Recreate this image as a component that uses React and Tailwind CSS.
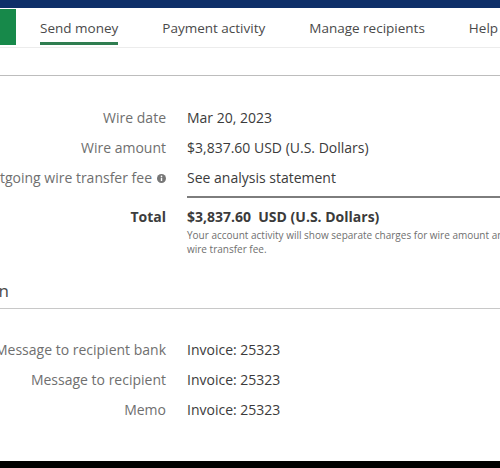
import React from "react";

const TABS = ["Send money", "Payment activity", "Manage recipients", "Help and support"];

const WIRE_ROWS = [
  { label: "Wire date", value: "Mar 20, 2023" },
  { label: "Wire amount", value: "$3,837.60 USD (U.S. Dollars)" },
  { label: "Outgoing wire transfer fee", value: "See analysis statement", info: true },
];

const MESSAGE_ROWS = [
  { label: "Message to recipient bank", value: "Invoice: 25323" },
  { label: "Message to recipient", value: "Invoice: 25323" },
  { label: "Memo", value: "Invoice: 25323" },
];

const InfoDot = () => (
  <svg viewBox="0 0 10 10" className="ml-[5px] h-[9px] w-[9px] shrink-0">
    <circle cx="5" cy="5" r="5" fill="#777" />
    <rect x="4.2" y="4.2" width="1.6" height="3.6" fill="#fff" />
    <circle cx="5" cy="2.7" r="0.9" fill="#fff" />
  </svg>
);

// label cell is right aligned; long labels spill off to the left
const Label = ({ children, bold }) => (
  <div className={`flex items-center justify-end whitespace-nowrap ${bold ? "font-bold text-[#3d3d3d]" : "text-[#6f6f6f]"}`}>
    {children}
  </div>
);

const Row = ({ label, value, info }) => (
  <div className="grid h-[30px] grid-cols-[166px_1fr] gap-x-[21px] text-[14px] leading-[30px]">
    <Label>
      {label}
      {info && <InfoDot />}
    </Label>
    <div className="whitespace-nowrap text-[#3b3b3b]">{value}</div>
  </div>
);

export default function App() {
  return (
    <div className="flex h-[468px] w-[500px] flex-col overflow-hidden bg-white font-['Open_Sans',sans-serif]">
      <div className="h-2 shrink-0 bg-[#0e2f69]" />

      {/* tabs */}
      <nav className="flex h-[40px] shrink-0 border-b border-[#ececec] pt-px">
        <div className="mb-[2px] w-4 shrink-0 bg-[#17894a]" />
        <ul className="ml-6 flex gap-[44px] whitespace-nowrap text-[13.5px] text-[#4a4a4a]">
          {TABS.map((t, i) => (
            <li key={t} className="relative pt-[9px]">
              {t}
              {i === 0 && <span className="absolute bottom-[2px] left-0 right-0 h-[3px] bg-[#2f7d50]" />}
            </li>
          ))}
        </ul>
      </nav>

      <div className="h-[28px] shrink-0 border-b border-[#bdbdbd]" />

      {/* wire details */}
      <section className="pt-[27px]">
        {WIRE_ROWS.map((r) => (
          <Row key={r.label} {...r} />
        ))}
        <div className="ml-[187px] mt-[3px] h-[2px] bg-[#7d7d7d]" />
        <div className="mt-[8px] grid grid-cols-[166px_1fr] gap-x-[21px]">
          <div className="text-[14px] leading-[22px]">
            <Label bold>Total</Label>
          </div>
          <div>
            <div className="whitespace-pre text-[14px] font-bold leading-[22px] text-[#3b3b3b]">
              {"$3,837.60  USD (U.S. Dollars)"}
            </div>
            <p className="whitespace-nowrap text-[10px] leading-[14px] text-[#6f6f6f]">
              Your account activity will show separate charges for wire amount and outgoing
              <br />
              wire transfer fee.
            </p>
          </div>
        </div>
      </section>

      {/* messages */}
      <div className="mt-[21px] flex h-[28px] w-[9px] shrink-0 items-center justify-end whitespace-nowrap text-[17px] text-[#4a4a4a]">
        Additional information
      </div>
      <div className="shrink-0 border-b border-[#c8c8c8] pt-[3px]" />

      <section className="pt-[26px]">
        {MESSAGE_ROWS.map((r) => (
          <Row key={r.label} {...r} />
        ))}
      </section>

      <div className="mt-auto h-[7px] shrink-0 bg-black" />
    </div>
  );
}
